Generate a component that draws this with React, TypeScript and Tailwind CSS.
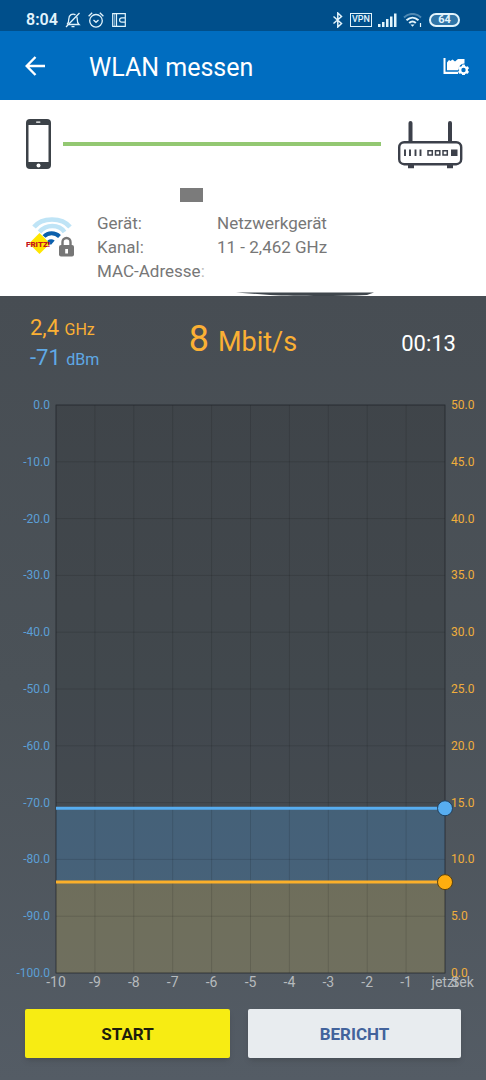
import type { ReactNode } from 'react';

const SIGNAL_DBM = -71;
const RATE_MBIT = 8;

const dbmLabels = ['0.0', '-10.0', '-20.0', '-30.0', '-40.0', '-50.0', '-60.0', '-70.0', '-80.0', '-90.0', '-100.0'];
const rateLabels = ['50.0', '45.0', '40.0', '35.0', '30.0', '25.0', '20.0', '15.0', '10.0', '5.0', '0.0'];
const timeLabels = ['-10', '-9', '-8', '-7', '-6', '-5', '-4', '-3', '-2', '-1', 'jetzt'];

function StatusBar() {
  return (
    <div className="flex h-[31px] items-center justify-between bg-[#004f8b] px-[26px] pt-2 text-[#e2f4fc]">
      <div className="flex items-center gap-[7px]">
        <span className="text-base leading-4 font-semibold">8:04</span>
        <svg className="h-4 w-4" viewBox="0 0 16 16" fill="none" stroke="currentColor" strokeWidth="1.3">
          <path d="M4 12.500h10c-1.500-1.300-1.800-2.500-1.800-5.500 0-.8-.1-1.500-.4-2.200M10.500 2.900C7.500.8 3.800 3 3.800 7c0 3-.3 4.200-1.800 5.500" />
          <path d="M6.500 14.700h3M14.500 1 1 15" />
        </svg>
        <svg className="h-4 w-4" viewBox="0 0 16 16" fill="none" stroke="currentColor" strokeWidth="1.3">
          <circle cx="8" cy="8.800" r="6.300" />
          <path d="M5.500 8 8 10.300 10.500 8M.6 4.200 4.200.8M15.400 4.200 11.800.8" />
        </svg>
        <svg className="h-4 w-4" viewBox="0 0 16 16" fill="none" stroke="currentColor" strokeWidth="1.2">
          <path d="M14.300 5.500V1.700H1.700v12.600h12.600v-3.800M5.500 2v12M14.300 5.800h-3.500a2.200 2.200 0 0 0 0 4.400h3.500z" />
          <path d="M3.600 2v12" strokeOpacity=".5" />
        </svg>
      </div>
      <div className="flex items-center gap-1.5">
        <svg className="h-4 w-3" viewBox="0 0 12 16" fill="none" stroke="currentColor" strokeWidth="1.5">
          <path d="M1.500 4.500 9.500 11.500 5.800 15V1l3.700 3.500-8 7" />
        </svg>
        <span className="flex h-[14px] w-[22px] items-center justify-center border border-current text-[9px] leading-none font-medium">VPN</span>
        <svg className="h-[14px] w-[19px]" viewBox="0 0 19 14" fill="currentColor">
          <rect x="0" y="11" width="2.500" height="3" />
          <rect x="4" y="9" width="2.500" height="5" />
          <rect x="8" y="6" width="2.500" height="8" />
          <rect x="12" y="3.500" width="2.500" height="10.500" />
          <rect x="16" y="0.500" width="2.500" height="13.500" />
        </svg>
        <svg className="h-[14px] w-5" viewBox="0 0 20 14" fill="none" stroke="currentColor" strokeWidth="2">
          <path d="M1 4.500C6-.3 13-.3 18 4.500" opacity=".35" />
          <path d="M3.500 7.300c3.700-3.500 8.300-3.500 12 0M6.200 10c2-1.900 4.600-1.900 6.600 0" />
          <path d="M7.500 11.500h4l-2 2.300z" fill="currentColor" stroke="none" />
          <path d="M17.500 10v4" strokeWidth="1.200" />
        </svg>
        <span className="flex h-[14px] w-[31px] items-center justify-center rounded-full border-2 border-current bg-[#2f75a8] text-[11px] leading-none font-bold">64</span>
      </div>
    </div>
  );
}

function AppBar() {
  return (
    <header className="flex h-[69px] items-center bg-[#006dc0] px-[17px] text-white">
      <button type="button" aria-label="Zurück" className="flex h-9 w-9 items-center justify-center">
        <svg className="h-5 w-5" viewBox="0 0 20 20" fill="none" stroke="currentColor" strokeWidth="2.400">
          <path d="M20 10H2M10.500 1 1.700 10l8.800 9" />
        </svg>
      </button>
      <h1 className="ml-9 flex-1 pt-1 text-[25px] leading-8">WLAN messen</h1>
      <button type="button" aria-label="Diagramm-Einstellungen">
        <svg className="h-[18px] w-[26px]" viewBox="0 0 26 18" fill="currentColor">
          <path d="M.500 1H2.500V14.800H15V17H.500z" />
          <path d="M4 5.500 6 3l1.500 1L9.500 2.500 12 4.500 15 2h6.500v4.500a6 6 0 0 0-6 6.800H4z" />
          <path
            fillRule="evenodd"
            d="M19.300 7.500h2.400l.4 1.500 1.200.7 1.500-.4 1.200 2-1.100 1.100v1.300l1.100 1-1.200 2.100-1.500-.4-1.200.7-.4 1.400h-2.400l-.4-1.400-1.200-.7-1.500.4-1.200-2.100 1.100-1v-1.300L15 11.300l1.200-2 1.500.4 1.200-.7zM20.500 10.800a2.200 2.200 0 1 0 0 4.400 2.200 2.200 0 0 0 0-4.400z"
          />
        </svg>
      </button>
    </header>
  );
}

function PhoneIcon() {
  return (
    <svg className="h-[50px] w-[25px] shrink-0" viewBox="0 0 25 50">
      <rect width="25" height="50" rx="4" fill="#3c4248" />
      <rect x="2.500" y="6" width="20" height="37" fill="#fff" />
      <rect x="10" y="2.500" width="4.500" height="1.200" rx=".6" fill="#fff" />
      <circle cx="12.500" cy="46.500" r="2" fill="#fff" />
    </svg>
  );
}

function RouterIcon() {
  return (
    <svg className="h-[50px] w-[65px] shrink-0" viewBox="0 0 65 50" fill="none" stroke="#3c404a">
      <path d="M12.500 24V4M52 24V4" strokeWidth="4" strokeLinecap="round" />
      <rect x="1.200" y="23.200" width="62" height="22" rx="5" strokeWidth="2.400" fill="#fff" />
      <path d="M10 47.500h6M49 47.500h6" strokeWidth="3.500" />
      <path d="M7 30.500v6.500M12 30.500v6.500M17.500 30.500v6.500M22.500 30.500v6.500" strokeWidth="1.900" />
      <path d="M30 31.700h4.300v4.300H30zM37.500 31.700h4.300v4.300h-4.300zM45 31.700h4.300v4.300H45z" strokeWidth="1.500" />
      <rect x="53" y="30.500" width="6.500" height="6.500" fill="#3c404a" stroke="none" />
    </svg>
  );
}

function NetworkIcon() {
  return (
    <svg className="mt-[5px] h-[42px] w-[50px]" viewBox="0 0 50 42" fill="none">
      <path d="M8 11C16 1 36 1 44 11" stroke="#bfe4f6" strokeWidth="4.500" />
      <path d="M13.500 16C20 8 33 8 38.500 16" stroke="#bfe4f6" strokeWidth="4.500" />
      <path d="M18 20.500c4-4.300 11-4.300 15.500 0" stroke="#0b60ad" strokeWidth="4" />
      <path d="M13.500 17 24 27.500 13.500 38 3 27.500z" fill="#ffe600" />
      <path d="M21.500 24.500c2.200-1.700 5-1.700 7.200 0L25.300 28.500h-3z" fill="#0b60ad" />
      <text x="0" y="31" fontSize="8" fontWeight="900" fill="#c5131c">
        FRITZ!
      </text>
      <rect x="32" y="25" width="18" height="17" fill="#fff" />
      <rect x="33" y="29" width="15" height="11.500" rx="2" fill="#767676" />
      <path d="M36.500 29v-3a4 4 0 0 1 8 0v3" stroke="#767676" strokeWidth="2.400" />
      <path d="M39.200 33h2.800v4.500h-2.800z" fill="#fff" />
    </svg>
  );
}

function InfoRow({ label, children }: { label: ReactNode; children?: ReactNode }) {
  return (
    <div className="flex">
      <dt className="w-[120px] shrink-0">{label}</dt>
      <dd>{children}</dd>
    </div>
  );
}

function ConnectionCard() {
  return (
    <section className="relative bg-white pt-[19px] pr-[23px] pb-[13px] pl-[26px]">
      <div className="flex items-center gap-3">
        <PhoneIcon />
        <div className="h-1 min-w-0 flex-1 bg-[#93c872]" />
        <div className="ml-[5px]">
          <RouterIcon />
        </div>
      </div>
      <div className="mt-[19px] ml-[154px] h-[14px] w-[23px] bg-[#7b7b7b]" />
      <div className="mt-[9px] flex gap-[21px]">
        <NetworkIcon />
        <dl className="text-[17px] leading-6 text-[#777]">
          <InfoRow label="Gerät:">Netzwerkgerät</InfoRow>
          <InfoRow label="Kanal:">11 - 2,462 GHz</InfoRow>
          <InfoRow label={<>MAC-Adresse<span className="text-[#bbb]">:</span></>} />
        </dl>
      </div>
      <svg className="absolute bottom-0 left-[235px] h-1 w-[140px]" viewBox="0 0 140 4">
        <path d="M1 .5H139L132 3C100 4.500 60 4 35 3z" fill="#3f464c" />
      </svg>
    </section>
  );
}

function Readings() {
  return (
    <div className="flex items-start justify-between px-[30px] pt-[17px]">
      <div className="w-[126px] text-[22px] leading-[30px]">
        <p className="text-[#fbb034]">
          2,4 <span className="text-base">GHz</span>
        </p>
        <p className="text-[#5fa9e6]">
          -71 <span className="text-base">dBm</span>
        </p>
      </div>
      <p className="pt-[6px] text-[36px] leading-10 text-[#fbb034]">
        8 <span className="text-[27px]">Mbit/s</span>
      </p>
      <p className="w-[126px] pt-[15px] text-right text-[22px] leading-8 text-white">00:13</p>
    </div>
  );
}

function AxisLabels({ labels, className }: { labels: string[]; className: string }) {
  return (
    <div className={`-my-2 flex flex-col justify-between text-xs leading-4 ${className}`}>
      {labels.map((label) => (
        <span key={label}>{label}</span>
      ))}
    </div>
  );
}

function Chart() {
  const signalY = -SIGNAL_DBM;
  const rateY = 100 - RATE_MBIT * 2;

  return (
    <div className="mt-8 flex min-h-80 flex-1">
      <AxisLabels labels={dbmLabels} className="w-[50px] text-right text-[#5b9fd6]" />
      <div className="ml-[6px] grid min-w-0 flex-1">
        <svg className="h-full w-full overflow-visible" role="img" aria-label="Signalstärke und Datenrate">
          <rect width="100%" height="100%" fill="#000" fillOpacity=".12" />
          <rect y={`${signalY}%`} width="100%" height={`${rateY - signalY}%`} fill="#4ba0e6" fillOpacity=".27" />
          <rect y={`${rateY}%`} width="100%" height={`${100 - rateY}%`} fill="#dccd78" fillOpacity=".27" />
          {timeLabels.map((label, i) => (
            <g key={label}>
              <line x1={`${i * 10}%`} x2={`${i * 10}%`} y1="0" y2="100%" stroke="#000" strokeOpacity=".12" />
              <line x1="0" x2="100%" y1={`${i * 10}%`} y2={`${i * 10}%`} stroke="#000" strokeOpacity=".12" />
              <text x={`${i * 10}%`} y="100%" dy="14" textAnchor="middle" fontSize="14" fill="#b6babd">
                {label}
              </text>
            </g>
          ))}
          <rect width="100%" height="100%" fill="none" stroke="#22272b" strokeOpacity=".6" />
          <text x="100%" y="100%" dx="6" dy="14" fontSize="14" fill="#b6babd">
            Sek
          </text>
          <line x1="0" x2="100%" y1={`${signalY}%`} y2={`${signalY}%`} stroke="#57adf0" strokeWidth="3" />
          <line x1="0" x2="100%" y1={`${rateY}%`} y2={`${rateY}%`} stroke="#fbb02a" strokeWidth="3" />
          <circle cx="100%" cy={`${signalY}%`} r="7.500" fill="#57adf0" stroke="#1f3f5c" />
          <circle cx="100%" cy={`${rateY}%`} r="7.500" fill="#ffae0f" stroke="#59400f" />
        </svg>
      </div>
      <AxisLabels labels={rateLabels} className="ml-[6px] w-[35px] text-[#f0ae3c]" />
    </div>
  );
}

export default function App() {
  return (
    <div className="flex min-h-screen flex-col font-[Roboto,sans-serif]">
      <StatusBar />
      <AppBar />
      <ConnectionCard />
      <main className="flex flex-1 flex-col bg-linear-to-b from-[#474d53] via-[#4b5258] to-[#545c65]">
        <Readings />
        <Chart />
        <div className="mt-9 mb-[22px] flex gap-[18px] px-[25px] text-[17px] font-bold">
          <button type="button" className="h-[49px] flex-[205] rounded-xs bg-[#f7ec13] pt-0.5 text-[#1d1d0c] shadow-md">
            START
          </button>
          <button type="button" className="h-[49px] flex-[213] rounded-xs bg-[#e8ecef] pt-0.5 text-[#42639c] shadow-md">
            BERICHT
          </button>
        </div>
      </main>
    </div>
  );
}
